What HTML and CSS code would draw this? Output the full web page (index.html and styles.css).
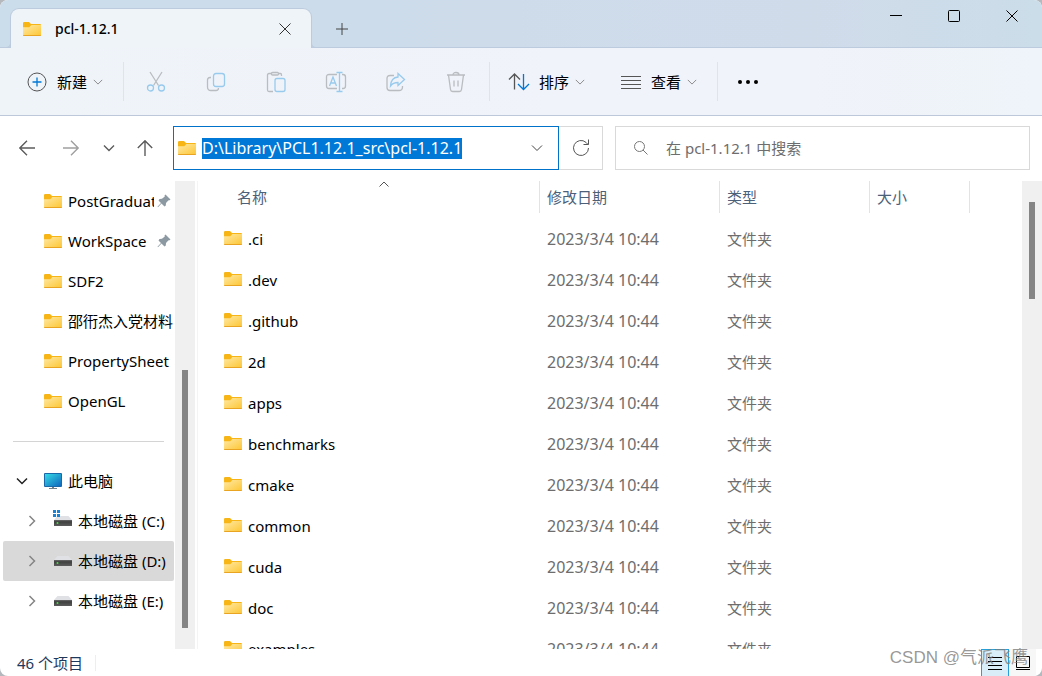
FILE: index.html
```html
<!DOCTYPE html>
<html lang="zh-CN">
<head>
<meta charset="utf-8">
<meta name="viewport" content="width=device-width, initial-scale=1">
<title>pcl-1.12.1</title>
<link rel="stylesheet" href="styles.css">
</head>
<body>
<svg class="sprite" aria-hidden="true">
  <defs>
    <linearGradient id="g-folder" x1="0" y1="0" x2="1" y2="1"><stop offset="0" stop-color="#ffe9a6"/><stop offset="1" stop-color="#fdc734"/></linearGradient>
    <linearGradient id="g-screen" x1="0" y1="0" x2="1" y2="1"><stop offset="0" stop-color="#35dbe6"/><stop offset="1" stop-color="#1068bd"/></linearGradient>
    <linearGradient id="g-drive" x1="0" y1="0" x2="0" y2="1"><stop offset="0" stop-color="#6a6a6a"/><stop offset=".3" stop-color="#404040"/><stop offset="1" stop-color="#5c5c5c"/></linearGradient>
  </defs>
  <symbol id="folder" viewBox="0 0 18 14">
    <path d="M0 1.2Q0 0 1.2 0H6L8 2H17Q18 2 18 3V6H0Z" fill="#f8b616"/>
    <path d="M0 5.2H6.3L8.3 3H18V13.5H0Z" fill="url(#g-folder)"/>
    <path d="M0 13H18V13.3Q18 14 17.3 14H.7Q0 14 0 13.3Z" fill="#e9a422"/>
  </symbol>
  <symbol id="drive" viewBox="0 0 20 18">
    <path d="M4.5 6H15.500L19 10H1Z" fill="#dfe1e4"/>
    <rect x="1" y="10" width="18" height="6" fill="url(#g-drive)"/>
    <circle cx="4.500" cy="13" r="1" fill="#43e03c"/>
  </symbol>
  <symbol id="pin" viewBox="0 0 14 14"><path d="M8.500 .5 13.500 5.500 12 6.500 11.500 6.300 9 9 8.800 11.500 7.500 12.500 4.500 9.500 1 13.300.5 12.800 4 9 1.500 6.500 2.500 5 5 4.800 7.800 2.500 7.500 1.500Z" fill="#8c99a3"/></symbol>
  <symbol id="down" viewBox="0 0 12 12"><path d="M1 3.500 6 8.500 11 3.500"/></symbol>
  <symbol id="right" viewBox="0 0 12 12"><path d="M3.500 1 8.500 6 3.500 11"/></symbol>
  <symbol id="close" viewBox="0 0 12 12"><path d="M.5.5 11.500 11.500M11.500.5.5 11.500"/></symbol>
</svg>

<div class="window">
  <header class="titlebar">
    <div class="tab">
      <svg class="folder"><use href="#folder"/></svg>
      <span class="tab-title">pcl-1.12.1</span>
      <button class="plain tab-close" aria-label="关闭标签页"><svg class="line s12"><use href="#close"/></svg></button>
    </div>
    <button class="plain new-tab" aria-label="新建标签页"><svg class="line s12" viewBox="0 0 12 12"><path d="M6 0V12M0 6H12"/></svg></button>
    <div class="caption">
      <button class="plain" aria-label="最小化"><svg class="line s12" viewBox="0 0 12 12"><path d="M0 5.500H12"/></svg></button>
      <button class="plain" aria-label="最大化"><svg class="line s12" viewBox="0 0 12 12"><rect x=".5" y=".5" width="11" height="11" rx="1"/></svg></button>
      <button class="plain" aria-label="关闭"><svg class="line s12"><use href="#close"/></svg></button>
    </div>
  </header>

  <div class="toolbar" role="toolbar" aria-label="命令">
    <button class="plain command new"><svg class="s20" viewBox="0 0 20 20"><circle cx="10" cy="10" r="9" fill="none" stroke="#555"/><path d="M10 5.500V14.500M5.500 10H14.500" stroke="#0078d4" stroke-width="1.300"/></svg><span>新建</span><svg class="line arrow"><use href="#down"/></svg></button>
    <span class="divider"></span>
    <div class="tools">
      <button class="plain" disabled aria-label="剪切"><svg class="tool" viewBox="0 0 20 20"><path class="gray" d="M4 0 12.500 13.500M16 0 7.500 13.500"/><circle class="blue" cx="4.500" cy="16" r="3"/><circle class="blue" cx="15.500" cy="16" r="3"/></svg></button>
      <button class="plain" disabled aria-label="复制"><svg class="tool" viewBox="0 0 20 20"><path class="gray" d="M5 5.500H4Q1.500 5.500 1.500 8V15Q1.500 18.500 5 18.500H10Q12.500 18.500 12.500 16"/><rect class="blue" x="7.500" y="1.500" width="11" height="13" rx="2.500"/></svg></button>
      <button class="plain" disabled aria-label="粘贴"><svg class="tool" viewBox="0 0 20 20"><path class="gray" d="M6 1.500H3Q1.500 1.500 1.500 3V18Q1.500 19.500 3 19.500H7M13 1.500H14.500Q15.500 1.500 15.500 3V4"/><rect class="gray" x="5.500" y=".5" width="7" height="2.500" rx="1"/><rect class="blue" x="9" y="6.500" width="10" height="13" rx="2"/></svg></button>
      <button class="plain" disabled aria-label="重命名"><svg class="tool" viewBox="0 0 20 20"><path class="gray" d="M11 2.500H3Q.5 2.500.5 5V14Q.5 16.500 3 16.500H11M16 2.500H17Q19.500 2.500 19.500 5V14Q19.500 16.500 17 16.500H16"/><path class="blue" d="M3.500 14 7 5 10.500 14M4.800 11H9.200M13.500.5V19.500M10.500.5H16.500M10.500 19.500H16.500"/></svg></button>
      <button class="plain" disabled aria-label="共享"><svg class="tool" viewBox="0 0 20 20"><path class="gray" d="M8 3.500H4Q1 3.500 1 6.500V15.500Q1 18.500 4 18.500H13Q16.500 18.500 16.500 15V14"/><path class="blue" d="M12 1.500 18.500 7.500 12 13.500V10.500Q7 10.500 4.500 14Q5 5.500 12 5Z"/></svg></button>
      <button class="plain" disabled aria-label="删除"><svg class="tool" viewBox="0 0 20 20"><path class="gray" d="M1 3H19M2.500 3 4.500 17.500Q4.800 19.500 6.500 19.500H13.500Q15.200 19.500 15.500 17.500L17.500 3M7 3Q7 .5 10 .5Q13 .5 13 3M8 8.500V14.500M12 8.500V14.500"/></svg></button>
    </div>
    <span class="divider"></span>
    <button class="plain command sort"><svg class="s20" viewBox="0 0 20 20" fill="none" stroke-width="1.300"><path stroke="#555" d="M5.500 17.500V2M0 7.500 5.500 2 11 7.500"/><path stroke="#0078d4" d="M14.500 2V17.500M9 12 14.500 17.500 20 12"/></svg><span>排序</span><svg class="line arrow"><use href="#down"/></svg></button>
    <button class="plain command view"><svg class="s20" viewBox="0 0 20 20"><path stroke="#555" d="M0 4.500H20M0 8.500H20M0 12.500H20M0 16.500H20"/></svg><span>查看</span><svg class="line arrow"><use href="#down"/></svg></button>
    <span class="divider"></span>
    <button class="plain more" aria-label="更多"><svg class="s20" viewBox="0 0 20 20"><circle cx="2" cy="10" r="2"/><circle cx="10" cy="10" r="2"/><circle cx="18" cy="10" r="2"/></svg></button>
  </div>

  <div class="locationbar">
    <nav class="history" aria-label="导航">
      <button class="plain" aria-label="后退"><svg class="s16" viewBox="0 0 16 16"><path d="M16 8H1M8 .8.8 8 8 15.200"/></svg></button>
      <button class="plain forward" disabled aria-label="前进"><svg class="s16" viewBox="0 0 16 16"><path d="M0 8H15M8 .8 15.200 8 8 15.200"/></svg></button>
      <button class="plain recent" aria-label="最近位置"><svg class="s12"><use href="#down"/></svg></button>
      <button class="plain" aria-label="向上"><svg class="s16" viewBox="0 0 16 16"><path d="M8 16V1M.8 8 8 .8 15.200 8"/></svg></button>
    </nav>
    <div class="address">
      <div class="path">
        <svg class="folder"><use href="#folder"/></svg>
        <input class="path-input" type="text" aria-label="地址" value="D:\Library\PCL1.12.1_src\pcl-1.12.1">
        <button class="plain path-drop" aria-label="以前的位置"><svg class="line s12"><use href="#down"/></svg></button>
      </div>
      <button class="plain refresh" aria-label="刷新"><svg class="line" viewBox="0 0 18 18"><path d="M16.500 9A7.500 7.500 0 1 1 14 3.400L16 5.500M16.500.5V5.500H11.500"/></svg></button>
    </div>
    <label class="search">
      <svg class="line" viewBox="0 0 14 14"><circle cx="5.500" cy="5.500" r="5"/><path d="M9 9 13.500 13.500"/></svg>
      <input type="search" aria-label="搜索" placeholder="在 pcl-1.12.1 中搜索">
    </label>
  </div>

  <div class="content">
    <nav class="tree" aria-label="文件夹树">
      <a class="node quick" href="#"><svg class="folder"><use href="#folder"/></svg><span class="label">PostGraduate</span><svg class="pin"><use href="#pin"/></svg></a>
      <a class="node quick" href="#"><svg class="folder"><use href="#folder"/></svg><span class="label">WorkSpace</span><svg class="pin"><use href="#pin"/></svg></a>
      <a class="node quick" href="#"><svg class="folder"><use href="#folder"/></svg><span class="label">SDF2</span></a>
      <a class="node quick" href="#"><svg class="folder"><use href="#folder"/></svg><span class="label">邵衎杰入党材料</span></a>
      <a class="node quick" href="#"><svg class="folder"><use href="#folder"/></svg><span class="label">PropertySheet</span></a>
      <a class="node quick" href="#"><svg class="folder"><use href="#folder"/></svg><span class="label">OpenGL</span></a>
      <hr class="rule">
      <a class="node computer" href="#"><svg class="expander"><use href="#down"/></svg><svg class="screen" viewBox="0 0 18 16"><rect width="18" height="14" rx="1" fill="#1769aa"/><rect x="1" y="1" width="16" height="12" fill="url(#g-screen)"/><path d="M8 14H10V15H13V16H5V15H8Z" fill="#74818a"/></svg><span class="label">此电脑</span></a>
      <a class="node disk" href="#"><svg class="expander"><use href="#right"/></svg><svg class="drive" viewBox="0 0 20 18"><use href="#drive"/><path d="M0 0H3V3H0ZM4 0H7V3H4ZM0 4H3V7H0ZM4 4H7V7H4Z" fill="#1683d8"/></svg><span class="label">本地磁盘 (C:)</span></a>
      <a class="node disk selected" href="#"><svg class="expander"><use href="#right"/></svg><svg class="drive"><use href="#drive"/></svg><span class="label">本地磁盘 (D:)</span></a>
      <a class="node disk" href="#"><svg class="expander"><use href="#right"/></svg><svg class="drive"><use href="#drive"/></svg><span class="label">本地磁盘 (E:)</span></a>
    </nav>
    <div class="scrollbar tree-scroll"><span class="thumb"></span></div>
    <main class="files">
      <table>
        <colgroup><col class="c-name"><col class="c-date"><col class="c-type"><col class="c-size"><col></colgroup>
        <thead><tr>
          <th class="name"><svg class="line sorted" viewBox="0 0 10 6"><path d="M.5 5.500 5 1 9.500 5.500"/></svg><span>名称</span></th>
          <th><span>修改日期</span></th><th><span>类型</span></th><th><span>大小</span></th><th class="rest"></th>
        </tr></thead>
        <tbody>
          <tr><td class="name"><svg class="folder"><use href="#folder"/></svg>.ci</td><td class="date">2023/3/4 10:44</td><td>文件夹</td><td></td><td></td></tr>
          <tr><td class="name"><svg class="folder"><use href="#folder"/></svg>.dev</td><td class="date">2023/3/4 10:44</td><td>文件夹</td><td></td><td></td></tr>
          <tr><td class="name"><svg class="folder"><use href="#folder"/></svg>.github</td><td class="date">2023/3/4 10:44</td><td>文件夹</td><td></td><td></td></tr>
          <tr><td class="name"><svg class="folder"><use href="#folder"/></svg>2d</td><td class="date">2023/3/4 10:44</td><td>文件夹</td><td></td><td></td></tr>
          <tr><td class="name"><svg class="folder"><use href="#folder"/></svg>apps</td><td class="date">2023/3/4 10:44</td><td>文件夹</td><td></td><td></td></tr>
          <tr><td class="name"><svg class="folder"><use href="#folder"/></svg>benchmarks</td><td class="date">2023/3/4 10:44</td><td>文件夹</td><td></td><td></td></tr>
          <tr><td class="name"><svg class="folder"><use href="#folder"/></svg>cmake</td><td class="date">2023/3/4 10:44</td><td>文件夹</td><td></td><td></td></tr>
          <tr><td class="name"><svg class="folder"><use href="#folder"/></svg>common</td><td class="date">2023/3/4 10:44</td><td>文件夹</td><td></td><td></td></tr>
          <tr><td class="name"><svg class="folder"><use href="#folder"/></svg>cuda</td><td class="date">2023/3/4 10:44</td><td>文件夹</td><td></td><td></td></tr>
          <tr><td class="name"><svg class="folder"><use href="#folder"/></svg>doc</td><td class="date">2023/3/4 10:44</td><td>文件夹</td><td></td><td></td></tr>
          <tr><td class="name"><svg class="folder"><use href="#folder"/></svg>examples</td><td class="date">2023/3/4 10:44</td><td>文件夹</td><td></td><td></td></tr>
        </tbody>
      </table>
    </main>
    <div class="scrollbar file-scroll"><span class="thumb"></span></div>
  </div>

  <footer class="status">
    <span class="count">46 个项目</span>
    <div class="modes">
      <button class="plain mode active" aria-label="详细信息"><svg viewBox="0 0 14 14"><path d="M0 1.500H14M0 5.500H14M0 9.500H14M0 13.500H14"/></svg></button>
      <button class="plain mode" aria-label="大图标"><svg viewBox="0 0 14 14"><path d="M.5.5H13.500V11.500H.5ZM0 13.500H14"/></svg></button>
    </div>
    <span class="watermark">CSDN @气派飞鹰</span>
  </footer>
</div>
</body>
</html>
```

FILE: styles.css
```css
* { box-sizing: border-box; }

body {
  margin: 0;
  background: #b5b9bd;
  color: #000;
  font: 15px/20px "Noto Sans", "Noto Sans CJK SC", sans-serif;
}

svg { display: block; flex: none; overflow: visible; }
.sprite { position: absolute; width: 0; height: 0; }

.plain {
  display: flex;
  align-items: center;
  justify-content: center;
  padding: 0;
  border: 0;
  background: none;
  color: inherit;
  font: inherit;
}

.line { fill: none; stroke: currentColor; }
.s12 { width: 12px; height: 12px; }
.s16 { width: 16px; height: 16px; }
.s20 { width: 20px; height: 20px; }
.folder { width: 18px; height: 14px; }

.window {
  display: flex;
  flex-direction: column;
  height: 100vh;
  overflow: hidden;
  border-radius: 8px;
  background: #fff;
}

/* Title bar */
.titlebar {
  display: flex;
  flex: none;
  height: 48px;
  padding-left: 10px;
  border-bottom: 1px solid #bccbdd;
  background: linear-gradient(90deg, #cbdcea, #cddcea 35%, #d0dbea 78%, #cbdde9);
}

.tab {
  position: relative;
  display: flex;
  align-items: center;
  width: 302px;
  height: 40px;
  margin-top: 8px;
  padding: 0 20px 0 12px;
  border: 1px solid #bccbdd;
  border-bottom: 0;
  border-radius: 9px 9px 0 0;
  background: #eff4f9;
}

.tab::before,
.tab::after {
  content: "";
  position: absolute;
  bottom: 0;
  width: 5px;
  height: 5px;
  border-bottom: 1px solid #bccbdd;
}
.tab::before { right: 100%; border-right: 1px solid #bccbdd; border-bottom-right-radius: 5px; }
.tab::after { left: 100%; border-left: 1px solid #bccbdd; border-bottom-left-radius: 5px; }

.tab-title {
  flex: 1;
  margin-left: 14px;
  font-size: 14px;
  font-weight: 500;
}
.tab-close { color: #333; }
.new-tab { width: 36px; margin: 10px 0 0 12px; color: #444; }
.caption { display: flex; height: 32px; margin: 0 1px 0 auto; }
.caption button { width: 58px; }

/* Command bar */
.toolbar {
  display: flex;
  flex: none;
  align-items: center;
  height: 68px;
  border-bottom: 1px solid #bdc8db;
  background: linear-gradient(90deg, #eff4f9, #f0f3f9 55%, #f0f3f9 78%, #eef4f9);
}

.command span { margin: 0 6px 0 10px; }
.arrow { width: 10px; height: 10px; color: #777; }
.new { margin: 0 20px 0 27px; }
.sort { margin: 0 36px 0 19px; }
.view { margin-right: 20px; }
.more { margin-left: 20px; }
.divider { width: 1px; height: 39px; background: #dfe4ea; }
.tools { display: flex; margin: 0 3px 0 2px; }
.tools button { width: 60px; height: 40px; }
.tool { width: 20px; height: 20px; fill: none; stroke-width: 1.3; }
.gray { stroke: #b9bcc0; }
.blue { stroke: #98caed; }

/* Location and search */
.locationbar { display: flex; flex: none; padding: 10px 12px 11px 0; }

.history {
  display: flex;
  flex: none;
  align-items: center;
  width: 173px;
  padding-left: 19px;
}
.history svg { fill: none; stroke: #5c5c5c; stroke-width: 1.4; }
.history .forward svg { stroke: #a0a0a0; }
.history .forward { margin-left: 28px; }
.history .recent { margin: 0 22px 0 24px; }

.address { display: flex; flex: 430 430 430px; min-width: 0; margin-right: 12px; }
.path {
  display: flex;
  flex: 1;
  align-items: center;
  min-width: 0;
  height: 44px;
  padding: 0 15px 0 4px;
  border: 1px solid #0072c9;
}
.path-input {
  field-sizing: content;
  min-width: 0;
  height: 21px;
  margin-left: 6px;
  padding: 0;
  border: 0;
  background: #0078d7;
  color: #fff;
  font: inherit;
  font-size: 16px;
}
.path-drop { margin-left: auto; color: #444; }
.refresh {
  width: 44px;
  height: 44px;
  border: 1px solid #d9d9d9;
  border-left: 0;
  color: #555;
}
.refresh svg { width: 18px; height: 18px; }

.search {
  display: flex;
  flex: 415 415 415px;
  align-items: center;
  min-width: 0;
  height: 44px;
  padding: 0 18px;
  border: 1px solid #d9d9d9;
}
.search svg { width: 14px; height: 14px; color: #777; }
.search input {
  flex: 1;
  min-width: 0;
  margin-left: 18px;
  padding: 0;
  border: 0;
  outline: 0;
  font: inherit;
}
.search input::placeholder { color: #6d6d6d; }

/* Folder tree */
.content { display: flex; flex: 1; min-height: 0; }
.tree { flex: none; width: 175px; padding: 0 1px 0 3px; overflow: hidden; }
.node {
  display: flex;
  align-items: center;
  height: 40px;
  color: #000;
  text-decoration: none;
  white-space: nowrap;
}
.quick { padding-left: 41px; }
.node .label { flex: 1; min-width: 0; margin-left: 6px; overflow: hidden; }
.pin { width: 14px; height: 14px; margin: 0 3px; }
.rule { height: 1px; margin: 20px 10px 19px; border: 0; background: #d4d4d4; }
.expander { width: 12px; height: 12px; fill: none; stroke: #222; stroke-width: 1.5; }
.computer { padding-left: 13px; }
.screen { width: 18px; height: 16px; margin-left: 16px; }
.disk { padding-left: 23px; }
.disk .expander { stroke: #858585; }
.drive { width: 20px; height: 18px; margin: 0 0 5px 15px; }
.disk .label { margin-left: 5px; }
.selected { border-radius: 2px; background: #d9d9d9; }

.scrollbar { display: grid; flex: none; width: 20px; background: #f0f0f0; }
.thumb { grid-row: 2; width: 6px; margin-left: 7px; background: #858585; }
.tree-scroll { grid-template-rows: 189fr 258fr 21fr; }
.file-scroll { grid-template-rows: 21fr 97fr 350fr; }

/* File list */
.files { flex: 1; min-width: 0; margin-left: 2px; overflow: hidden; border-left: 1px solid #f4f4f4; }
table { width: 100%; border-collapse: separate; border-spacing: 0; table-layout: fixed; }
.c-name { width: 342px; }
.c-date { width: 180px; }
.c-type { width: 150px; }
.c-size { width: 100px; }

th { height: 37px; padding: 0; color: #4c607a; font-weight: 400; text-align: left; vertical-align: top; }
th span { display: block; height: 32px; padding-left: 7px; border-right: 1px solid #e3e3e3; line-height: 32px; }
th.name { position: relative; padding-left: 32px; }
.sorted { position: absolute; top: 0; left: 181px; width: 10px; height: 6px; color: #555; }

td { height: 41px; padding: 0 0 0 7px; color: #6d6d6d; white-space: nowrap; }
td.name { padding-left: 26px; color: #000; }
td.date { font-size: 16px; }
td .folder { display: inline-block; margin-right: 6px; }

/* Status bar */
.status { position: relative; display: flex; flex: none; align-items: center; height: 27px; padding: 0 6px 0 17px; }
.count { padding-right: 12px; border-right: 1px solid #eee; color: #1e395b; line-height: 16px; }
.modes { display: flex; gap: 1px; height: 27px; margin-left: auto; }
.mode { width: 26px; background: #f7f7f7; }
.mode svg { width: 14px; height: 14px; fill: none; stroke: #000; }
.mode.active { width: 28px; border: 1px solid #26a0da; border-bottom: 0; background: #d8edf8; }
.watermark {
  position: absolute;
  right: 14px;
  bottom: 8px;
  color: rgba(125, 125, 125, 0.8);
  font-family: "Liberation Sans", "Noto Sans CJK SC", sans-serif;
  font-size: 17px;
  line-height: 20px;
}
```
